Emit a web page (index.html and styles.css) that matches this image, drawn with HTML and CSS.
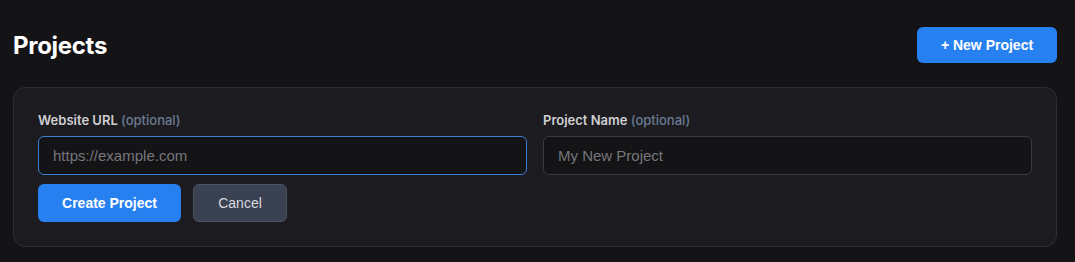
FILE: index.html
```html
<!DOCTYPE html>
<html>
<head>
<meta charset="utf-8">
<link rel="stylesheet" href="styles.css">
</head>
<body>
<div class="page">
  <header class="top">
    <h1 class="title">Projects</h1>
    <button class="btn btn-primary btn-new">+ New Project</button>
  </header>
  <section class="card">
    <div class="fields">
      <div class="field">
        <label class="label">Website URL <span class="opt">(optional)</span></label>
        <input class="input input-focus" type="text" placeholder="https://example.com">
      </div>
      <div class="field">
        <label class="label">Project Name <span class="opt">(optional)</span></label>
        <input class="input" type="text" placeholder="My New Project">
      </div>
    </div>
    <div class="actions">
      <button class="btn btn-primary btn-create">Create Project</button>
      <button class="btn btn-secondary">Cancel</button>
    </div>
  </section>
</div>
</body>
</html>
```
FILE: styles.css
```css
* { box-sizing: border-box; }
html, body { margin: 0; background: #141416; }
body { font-family: "Liberation Sans", Arial, sans-serif; }
.page { padding: 27px 18px 0 13px; }
.top { display: flex; justify-content: space-between; align-items: center; height: 36px; margin-bottom: 24px; }
.title { margin: 0; font-family: "Inter", sans-serif; font-weight: 700; font-size: 24px; color: #ffffff; letter-spacing: -0.3px; }
.btn { font-family: "Liberation Sans", Arial, sans-serif; border-radius: 6px; cursor: pointer; font-size: 14px; }
.btn-primary { background: #2680f0; color: #fff; border: none; font-weight: 700; }
.btn-new { width: 140px; height: 36px; font-size: 14px; }
.card { background: #1c1c20; border: 1px solid #2e2e33; border-radius: 12px; padding: 23px 24px 24px 24px; }
.fields { display: grid; grid-template-columns: 1fr 1fr; column-gap: 16px; }
.field { display: flex; flex-direction: column; }
.label { font-family: "Inter", sans-serif; font-size: 13px; font-weight: 600; color: #cfcfd2; margin-bottom: 7px; line-height: 18px; }
.opt { color: #6a7a92; font-weight: 500; }
.input { height: 39px; background: #141416; border: 1px solid #3a3a40; border-radius: 6px; padding: 0 14px; font-family: "Liberation Sans", Arial, sans-serif; font-size: 15px; color: #ddd; outline: none; }
.input::placeholder { color: #76767b; }
.input-focus { border-color: #3a7fd5; }
.actions { display: flex; gap: 12px; margin-top: 9px; }
.btn-create { width: 143px; height: 38px; }
.btn-secondary { width: 94px; height: 38px; background: #3a4150; border: 1px solid #4b5262; color: #d7dae0; font-size: 14px; }
```
